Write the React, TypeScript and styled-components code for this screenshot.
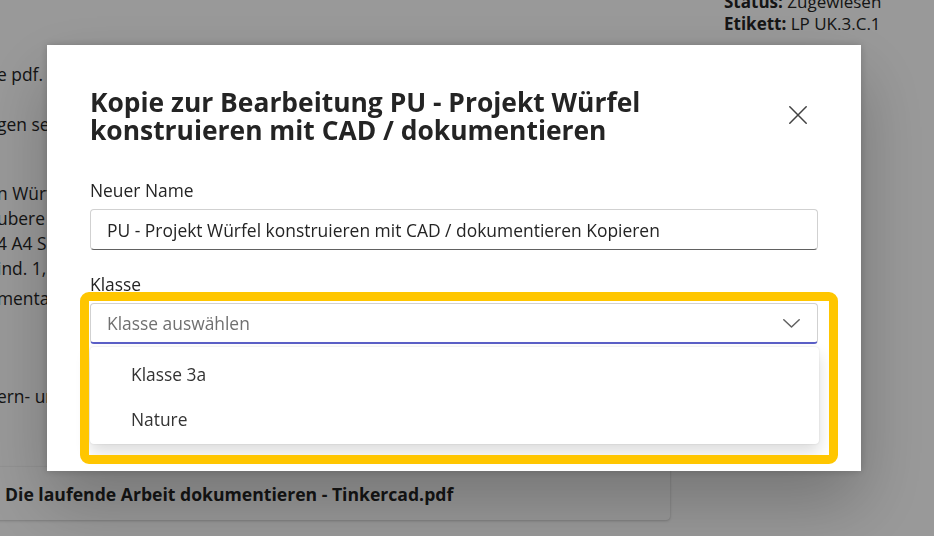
import React from "react";
import styled, { createGlobalStyle } from "styled-components";

const Global = createGlobalStyle`
  html, body { margin: 0; padding: 0; }
  body {
    width: 934px;
    height: 536px;
    overflow: hidden;
    background: #ffffff;
    font-family: "Open Sans", "Noto Sans", sans-serif;
    color: #242424;
  }
`;

const Page = styled.div`
  display: flex;
  align-items: flex-start;
  width: 934px;
  height: 536px;
  overflow: hidden;
`;

const Main = styled.div`
  display: flex;
  flex-direction: column;
  width: 686px;
  margin-left: -16px;
  flex-shrink: 0;
`;

const Para = styled.div<{ $top: number }>`
  margin-top: ${(p) => p.$top}px;
  padding-left: 13px;
  font-size: 17.4px;
  line-height: 25px;
  white-space: nowrap;
`;

const Card = styled.div<{ $top: number }>`
  margin-top: ${(p) => p.$top}px;
  height: 53px;
  display: flex;
  align-items: center;
  padding-left: 21px;
  background: #ffffff;
  border-radius: 4px;
  box-shadow: 0 1px 3px rgba(0, 0, 0, 0.18), 0 0 2px rgba(0, 0, 0, 0.1);
  font-size: 17.6px;
  font-weight: 700;
`;

const Side = styled.div`
  margin-left: 54px;
  margin-top: -9px;
  display: flex;
  flex-direction: column;
  font-size: 17px;
  line-height: 22px;
  white-space: nowrap;
`;

const Overlay = styled.div`
  position: fixed;
  inset: 0;
  background: rgba(0, 0, 0, 0.4);
  display: flex;
  align-items: flex-start;
  padding: 45px 0 0 47px;
`;

const Dialog = styled.div`
  position: relative;
  width: 814px;
  height: 426px;
  box-sizing: border-box;
  background: #ffffff;
  padding: 43px 43px 0 43px;
  box-shadow: 0 32px 64px rgba(0, 0, 0, 0.24), 0 0 8px rgba(0, 0, 0, 0.2);
`;

const Header = styled.div`
  display: flex;
  justify-content: space-between;
  align-items: flex-start;
`;

const Title = styled.h2`
  margin: 0;
  max-width: 620px;
  font-size: 26.4px;
  line-height: 28px;
  font-weight: 700;
  color: #242424;
`;

const CloseButton = styled.button`
  width: 32px;
  height: 32px;
  margin: 11px 4px 0 0;
  border: none;
  background: transparent;
  padding: 0;
  display: flex;
  align-items: center;
  justify-content: center;
  color: #424242;
`;

const Field = styled.div<{ $top: number }>`
  margin-top: ${(p) => p.$top}px;
  display: flex;
  flex-direction: column;
`;

const Label = styled.label`
  font-size: 17.4px;
  line-height: 22px;
  color: #242424;
  margin-bottom: 8px;
`;

const TextInput = styled.div`
  height: 41px;
  box-sizing: border-box;
  border: 1px solid #d1d1d1;
  border-bottom-color: #616161;
  border-radius: 4px;
  display: flex;
  align-items: center;
  padding-left: 16px;
  font-size: 17.45px;
  color: #242424;
  white-space: nowrap;
`;

const SelectWrap = styled.div`
  position: relative;
  margin-top: 0;
`;

const SelectBox = styled.div`
  height: 41px;
  box-sizing: border-box;
  border: 1px solid #d1d1d1;
  border-bottom: 2px solid #5b5fc7;
  border-radius: 4px;
  display: flex;
  align-items: center;
  justify-content: space-between;
  padding: 0 17px 0 16px;
  font-size: 17.4px;
  color: #707070;
`;

const Listbox = styled.div`
  position: absolute;
  left: 0;
  right: -1px;
  top: 44px;
  box-sizing: border-box;
  height: 97px;
  padding: 4px 0;
  background: #ffffff;
  border-radius: 4px;
  box-shadow: 0 0 2px rgba(0, 0, 0, 0.12), 0 8px 16px rgba(0, 0, 0, 0.14);
`;

const Option = styled.div`
  height: 45px;
  display: flex;
  align-items: center;
  padding-left: 41px;
  font-size: 17.4px;
  color: #333333;
`;

const Highlight = styled.div`
  position: absolute;
  left: 33px;
  top: 247px;
  width: 758px;
  height: 172px;
  box-sizing: border-box;
  border: 9px solid #ffc600;
  border-radius: 9px;
  pointer-events: none;
`;

export default function App() {
  return (
    <>
      <Global />
      <Page>
        <Main>
          <Para $top={62}>e pdf.</Para>
          <Para $top={25}>gen sehen</Para>
          <Para $top={44}>
            n Würfel
            <br />
            ubere Darstellung
            <br />
            4 A4 Seiten
            <br />
            ind. 1,5
          </Para>
          <Para $top={5}>mentation</Para>
          <Para $top={73}>ern- und</Para>
          <Card $top={58}>Die laufende Arbeit dokumentieren - Tinkercad.pdf</Card>
        </Main>
        <Side>
          <div>
            <b>Status:</b> Zugewiesen
          </div>
          <div>
            <b>Etikett:</b> LP UK.3.C.1
          </div>
        </Side>
      </Page>
      <Overlay>
        <Dialog>
          <Header>
            <Title>Kopie zur Bearbeitung PU - Projekt Würfel konstruieren mit CAD / dokumentieren</Title>
            <CloseButton aria-label="Schließen">
              <svg width="18" height="18" viewBox="0 0 18 18">
                <path d="M0.8 0.8 L17.2 17.2 M17.2 0.8 L0.8 17.2" stroke="#424242" strokeWidth="1.5" strokeLinecap="round" fill="none" />
              </svg>
            </CloseButton>
          </Header>
          <Field $top={35}>
            <Label>Neuer Name</Label>
            <TextInput>PU - Projekt Würfel konstruieren mit CAD / dokumentieren Kopieren</TextInput>
          </Field>
          <Field $top={23}>
            <Label>Klasse</Label>
            <SelectWrap>
              <SelectBox>
                <span>Klasse auswählen</span>
                <svg width="17" height="9" viewBox="0 0 17 9">
                  <path d="M0.8 0.8 L8.5 8 L16.2 0.8" stroke="#616161" strokeWidth="1.5" strokeLinecap="round" strokeLinejoin="round" fill="none" />
                </svg>
              </SelectBox>
              <Listbox role="listbox">
                <Option>Klasse 3a</Option>
                <Option>Nature</Option>
              </Listbox>
            </SelectWrap>
          </Field>
          <Highlight />
        </Dialog>
      </Overlay>
    </>
  );
}
